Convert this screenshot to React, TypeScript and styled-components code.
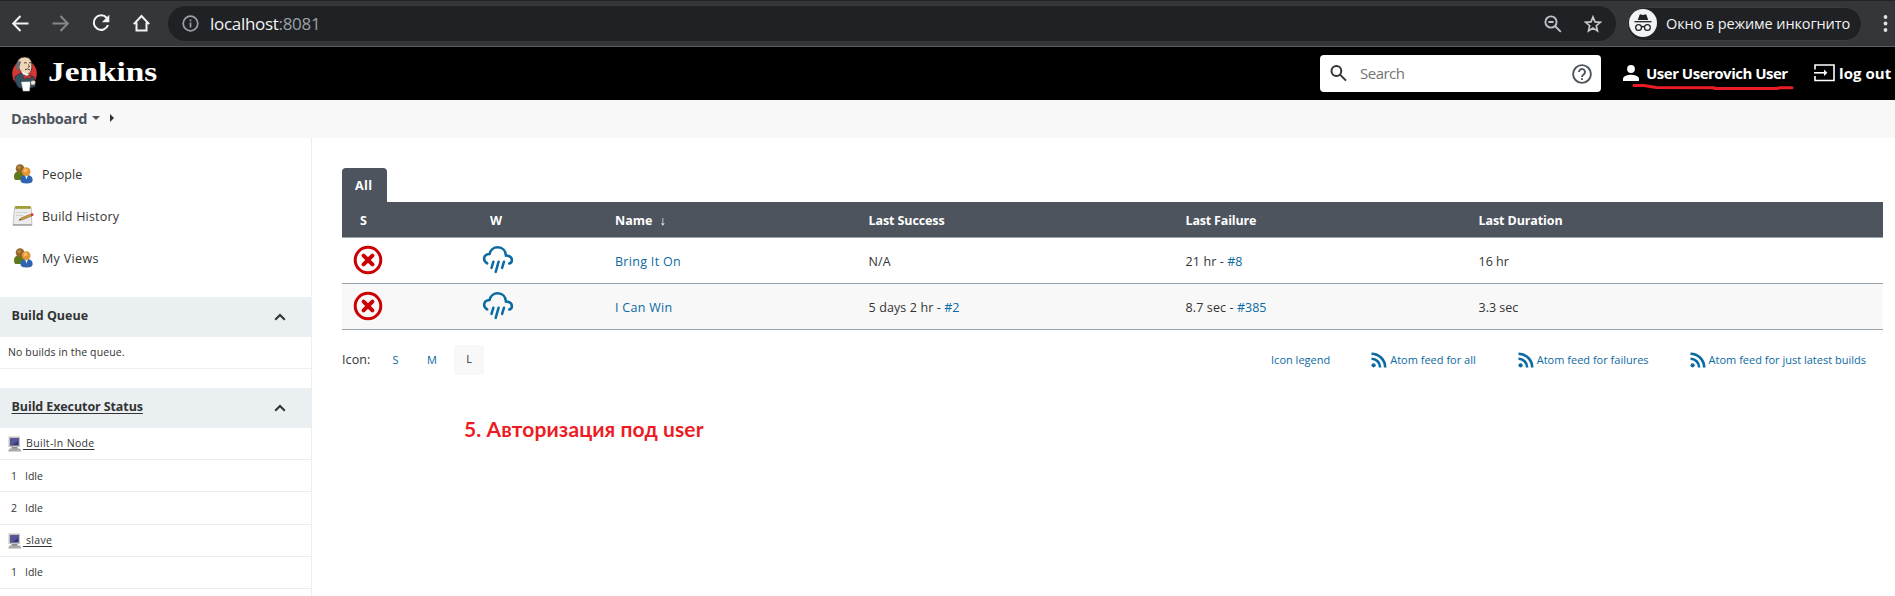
import React from "react";
import styled, { createGlobalStyle, css } from "styled-components";

const GlobalStyle = createGlobalStyle`
  * { box-sizing: border-box; }
  body {
    margin: 0;
    background: #fff;
    color: #333;
    font-family: "Open Sans", "Noto Sans", sans-serif;
    font-size: 12.5px;
    overflow: hidden;
  }
  svg { display: block; flex: none; }
`;

const link = css`
  color: #0b6aa2;
  text-decoration: none;
`;

/* ---------- browser chrome ---------- */

const BrowserBar = styled.div`
  display: flex;
  align-items: center;
  height: 47px;
  padding: 0 3px 0 12px;
  background: #35363a;
  border-top: 1px solid #222327;
  border-bottom: 1px solid #5c5e62;
`;

const NavButtons = styled.div`
  display: flex;
  align-items: center;
  gap: 23px;
  width: 156px;
  padding-bottom: 1px;
`;

const AddressBar = styled.div`
  display: flex;
  align-items: center;
  width: 1448px;
  height: 35px;
  margin-right: 11px;
  padding: 0 14px 0 14px;
  border-radius: 18px;
  background: #202124;
`;

const Address = styled.div`
  flex: 1;
  margin-left: 11px;
  color: #9aa0a6;
  font-size: 17px;
  letter-spacing: -0.3px;

  b {
    color: #f1f3f4;
    font-weight: 400;
  }
`;

const AddressActions = styled.div`
  display: flex;
  align-items: center;
  gap: 22px;
`;

const IncognitoBadge = styled.div`
  display: flex;
  align-items: center;
  gap: 9px;
  width: 235px;
  height: 34px;
  margin-right: 21px;
  padding: 0 0 1px 1px;
  border: 1px solid #3c3d41;
  border-radius: 17px;
  background: #202124;
  color: #f1f3f4;
  font-size: 14.5px;
  letter-spacing: -0.12px;
  white-space: nowrap;
`;

/* ---------- page header ---------- */

const Header = styled.header`
  position: relative;
  display: flex;
  align-items: center;
  height: 53px;
  padding: 0 3px 0 11px;
  background: #000;
  color: #fff;
`;

const BrandName = styled.div`
  flex: 1;
  margin-left: 10px;
  padding-bottom: 4px;
  font: 700 28px/32px "Liberation Serif", serif;

  span {
    display: inline-block;
    transform: scaleX(1.19);
    transform-origin: left;
  }
`;

const SearchBox = styled.div`
  display: flex;
  align-items: center;
  width: 281px;
  height: 37px;
  margin-right: 22px;
  padding: 0 9px 0 10px;
  border-radius: 4px;
  background: #fff;
`;

const Placeholder = styled.span`
  flex: 1;
  margin-left: 13px;
  padding-bottom: 1px;
  color: #757575;
  font-size: 15px;
  letter-spacing: -0.5px;
`;

const HeaderLink = styled.a<{ $width: number; $gap: number; $spacing: number }>`
  display: flex;
  align-items: center;
  gap: ${(p) => p.$gap}px;
  width: ${(p) => p.$width}px;
  padding-bottom: 2px;
  color: #fff;
  font-size: 15px;
  font-weight: 700;
  letter-spacing: ${(p) => p.$spacing}px;
  white-space: nowrap;
`;

const RedUnderline = styled.svg`
  position: absolute;
  top: 35px;
  left: 1630px;
`;

const Breadcrumbs = styled.nav`
  display: flex;
  align-items: center;
  height: 38px;
  padding: 0 0 2px 11px;
  background: #f8f8f8;
  color: #4d545d;
  font-size: 14.5px;
  font-weight: 700;
  letter-spacing: -0.32px;

  svg:first-of-type { margin: 0 10px 0 5px; }
`;

/* ---------- side panel ---------- */

const Body = styled.div`
  display: flex;
  height: 458px;
`;

const SidePanel = styled.aside`
  width: 312px;
  border-right: 1px solid #eceeef;
`;

const Tasks = styled.div`
  padding: 15px 0 18px 12px;
`;

const Task = styled.a<{ $spacing: number }>`
  display: flex;
  align-items: center;
  gap: 8px;
  height: 42px;
  letter-spacing: ${(p) => p.$spacing}px;
`;

const PaneHeader = styled.div<{ $underline?: boolean }>`
  display: flex;
  align-items: center;
  justify-content: space-between;
  height: 40px;
  padding: 0 25px 3px 11.5px;
  background: #eaeff2;
  font-weight: 700;
  text-decoration: ${(p) => (p.$underline ? "underline" : "none")};
  text-underline-offset: 2px;
  letter-spacing: ${(p) => (p.$underline ? "-0.1px" : "0")};

  svg { margin-top: 2px; }
`;

const QueueRow = styled.div`
  display: flex;
  align-items: center;
  height: 32px;
  margin-bottom: 19px;
  padding: 0 0 1px 8px;
  border-bottom: 1px solid #eaeff2;
  font-size: 10.5px;
  letter-spacing: 0.13px;
`;

const ExecutorRow = styled.div<{ $node?: boolean }>`
  display: flex;
  align-items: center;
  gap: ${(p) => (p.$node ? 1 : 8)}px;
  height: 32.2px;
  padding: 0 0 ${(p) => (p.$node ? 1 : 0)}px ${(p) => (p.$node ? 8 : 11)}px;
  border-bottom: 1px solid #ececec;
  font-size: 10.5px;

  svg { margin-top: 2px; }

  a {
    text-decoration: underline;
    text-underline-offset: 2px;
    letter-spacing: 0.32px;
    white-space: pre;
  }
`;

/* ---------- main panel ---------- */

const Main = styled.main`
  width: 1571px;
  padding: 30px 0 0 30px;
`;

const Tab = styled.div`
  display: flex;
  align-items: center;
  width: 45px;
  height: 34px;
  padding-left: 13px;
  border-radius: 4px 4px 0 0;
  background: #4d545d;
  color: #fff;
  font-weight: 700;
  letter-spacing: 0.4px;
`;

const Row = styled.div<{ $striped?: boolean }>`
  display: grid;
  grid-template-columns: 137px 136px 253.5px 317px 293px 1fr;
  align-items: center;
  height: 46px;
  border-bottom: 1px solid #98a5ae;
  background: ${(p) => (p.$striped ? "#f8f8f8" : "#fff")};
`;

const HeadRow = styled(Row)`
  height: 36px;
  background: #4d545d;
  color: #fff;
  font-weight: 700;
  letter-spacing: -0.1px;
`;

const Cell = styled.div<{ $indent?: number; $spacing?: number }>`
  padding: 2px 0 0 ${(p) => p.$indent || 0}px;
  letter-spacing: ${(p) => (p.$spacing === undefined ? "inherit" : p.$spacing + "px")};
`;

const IconCell = styled.div<{ $indent: number }>`
  padding: 0 0 1px ${(p) => p.$indent}px;
`;

const JobLink = styled.a`
  ${link}
  font-weight: 500;
  letter-spacing: 0.3px;
`;

const BuildLink = styled.a`
  ${link}
  font-weight: 500;
  letter-spacing: -0.05px;
`;

const SortArrow = styled.span`
  margin-left: 7px;
  font-weight: 400;
`;

const TableFooter = styled.div`
  display: flex;
  align-items: center;
  height: 59px;
`;

const SizeLabel = styled.span`
  width: 50.5px;
  letter-spacing: 0.1px;
`;

const SizeLink = styled.a<{ $width: number }>`
  ${link}
  width: ${(p) => p.$width}px;
  font-size: 11px;
`;

const SizeCurrent = styled.span`
  display: flex;
  align-items: center;
  justify-content: center;
  width: 30px;
  height: 30px;
  padding-bottom: 2px;
  border-radius: 4px;
  background: #f8f8f8;
  font-size: 11px;
`;

const FeedLinks = styled.div`
  display: flex;
  margin-left: auto;
  padding-right: 17px;
`;

const FeedLink = styled.a<{ $after: number }>`
  ${link}
  display: flex;
  align-items: center;
  gap: 3px;
  margin-right: ${(p) => p.$after}px;
  font-size: 11px;
`;

const Note = styled.p`
  margin: 25px 0 0 122px;
  color: #ed1c24;
  font: 700 21px/30px Lato, "Open Sans", sans-serif;
  letter-spacing: 0.1px;
`;

/* ---------- icons ---------- */

const ArrowIcon = ({ flip, color }: { flip?: boolean; color: string }) => (
  <svg width="17" height="17" viewBox="0 0 17 17" fill="none" stroke={color} strokeWidth="2">
    <path d={flip ? "M.5 8.5H15M8.5 1l7.3 7.5-7.3 7.5" : "M16.5 8.5H2M8.5 1 1.2 8.5l7.3 7.5"} />
  </svg>
);

const ReloadIcon = () => (
  <svg width="18" height="18" viewBox="0 0 18 18" fill="none">
    <path d="M14.8 4A7.3 7.3 0 1 0 16 11" stroke="#f1f3f4" strokeWidth="2.1" />
    <path d="M17.3.8v7.4H9.9z" fill="#f1f3f4" />
  </svg>
);

const HomeIcon = () => (
  <svg width="18" height="18" viewBox="0 0 18 18" fill="none" stroke="#f1f3f4" strokeWidth="2">
    <path d="M.8 10.100 8.500 2l7.700 8.100M3.500 8.500v8h10v-8" />
  </svg>
);

const InfoIcon = () => (
  <svg width="17" height="17" viewBox="0 0 17 17" fill="none" stroke="#9aa0a6" strokeWidth="1.7">
    <circle cx="8.5" cy="8.5" r="7.3" />
    <path d="M8.5 7.6v4.8M8.5 4.5v1.8" />
  </svg>
);

const ZoomOutIcon = () => (
  <svg width="18" height="18" viewBox="0 0 18 18" fill="none" stroke="#bdc1c6" strokeWidth="1.9">
    <circle cx="7" cy="7" r="5.6" />
    <path d="M4.4 7h5.2M11 11l5.8 5.8" />
  </svg>
);

const StarIcon = () => (
  <svg width="18" height="18" viewBox="0 0 18 18" fill="none" stroke="#c4c7ca" strokeWidth="1.7">
    <path d="m9 2 2 4.9 5.3.4-4 3.4 1.2 5.2L9 13.1l-4.5 2.8 1.2-5.2-4-3.4L7 6.9z" />
  </svg>
);

const IncognitoIcon = () => (
  <svg width="28" height="28" viewBox="0 0 28 28">
    <circle cx="14" cy="14" r="14" fill="#f1f3f4" />
    <path d="M8.8 11 10.5 6q.4-.9 1.4-.6l2.1.5 2.1-.5q1-.3 1.4.6l1.7 5z" fill="#202124" />
    <path d="M5.5 12.7h17" stroke="#202124" strokeWidth="1.3" />
    <g fill="none" stroke="#202124" strokeWidth="1.3">
      <circle cx="9.6" cy="18.5" r="2.9" />
      <circle cx="18.4" cy="18.5" r="2.9" />
      <path d="M12.4 18q1.6-1 3.2 0" />
    </g>
  </svg>
);

const MenuDots = () => (
  <svg width="6" height="20" viewBox="0 0 6 20" fill="#dfe1e5">
    <circle cx="2.500" cy="3" r="1.9" />
    <circle cx="2.500" cy="9.5" r="1.9" />
    <circle cx="2.500" cy="16" r="1.9" />
  </svg>
);

const ButlerLogo = () => (
  <svg width="27" height="36" viewBox="0 0 27 36">
    <ellipse cx="13.5" cy="17.5" rx="12.3" ry="13.2" fill="#d33833" />
    <path d="M4 20.5 10 17l7 1.5 6 2.5 1.3 9.5-4 1.2-12 .3Q4 29 4 20.5z" fill="#335061" stroke="#1b2a33" strokeWidth=".7" />
    <path d="M5.7 9.5Q6 1.2 13.8 1q7 .4 7 7.6.3 3-.8 6.5-1.5 3.8-5 3.4Q9.5 17 8.5 13z" fill="#eed5b5" stroke="#2a2522" strokeWidth=".7" />
    <path d="M6 6.2Q4.2 9.5 6 13.4l2.3 1.3.4-4.8 1.2-3.6-1-1.6z" fill="#6d6b6d" />
    <path d="M13 7.1q1.5-1 2.8 0M18 7q1-.7 2 0M14 13.6q2.5-1.5 5 .4M17.6 8.5l.7 2.4-1.2.4" fill="none" stroke="#35302d" strokeWidth=".9" />
    <path d="m10.3 15.5 3.7 6 4.3-3" fill="#fff" />
    <path d="m12.6 18.6 3.4 1.6 3.6-1.6.3 4.2-3.6-1.2-3.2 1.4z" fill="#d33833" stroke="#7a1815" strokeWidth=".5" />
    <path d="m10.4 26 9-.3-1 9.4h-6.3z" fill="#fff" stroke="#bbb" strokeWidth=".5" />
    <path d="M19.5 25.5q3-2.3 5.2 0l-.8 3.4-4 .2z" fill="#f0e8df" stroke="#333" strokeWidth=".6" />
  </svg>
);

const SearchIcon = () => (
  <svg width="17" height="17" viewBox="0 0 17 17" fill="none" stroke="#333" strokeWidth="2">
    <circle cx="6.4" cy="6" r="4.9" />
    <path d="m10 9.600 6 6" />
  </svg>
);

const HelpIcon = () => (
  <svg width="20" height="20" viewBox="0 0 20 20" fill="none" stroke="#4d545d" strokeWidth="1.9">
    <circle cx="10" cy="10" r="8.9" />
    <path d="M7 8a3 3 0 1 1 4.9 2.3c-1.2.9-1.9 1.4-1.9 2.7M10 14.2v1.9" />
  </svg>
);

const UserIcon = () => (
  <svg width="16" height="16" viewBox="0 0 16 16" fill="#fff">
    <circle cx="8" cy="4" r="3.9" />
    <path d="M0 16v-2.2C0 11 5 9.8 8 9.8s8 1.2 8 4V16z" />
  </svg>
);

const LogoutIcon = () => (
  <svg width="21" height="18" viewBox="0 0 21 18" fill="none" stroke="#fff" strokeWidth="1.6">
    <path d="M1 5.5V1h19v15.5H1V12" />
    <path d="M0 8.8h11.5" />
    <path d="m10 5.6 3.4 3.2-3.4 3.2z" fill="#fff" stroke="none" />
  </svg>
);

const PeopleIcon = () => (
  <svg width="22" height="22" viewBox="0 0 22 22">
    <path d="M2 13.5q0-5 5-5t5.5 5l-.6 3.6H3.4Q2 16.600 2 13.5z" fill="#5d7a1c" />
    <circle cx="8" cy="5.600" r="4.300" fill="#94662a" />
    <circle cx="7" cy="4.500" r="1.800" fill="#b48a4c" />
    <path d="M8.500 17q0-5 6-5t6.200 5q0 3.500-6.200 3.500T8.500 17z" fill="#2f64b0" />
    <path d="m12.800 12 1.700 4.500 1.600-4.500z" fill="#e8effa" />
    <circle cx="14.200" cy="8.600" r="4.300" fill="#e4942f" />
    <circle cx="13.400" cy="7.400" r="2" fill="#f8bd69" />
  </svg>
);

const NotepadIcon = () => (
  <svg width="22" height="22" viewBox="0 0 22 22">
    <path d="m2.600 2.500h16.600l.7 17.700H1z" fill="#ececec" stroke="#b5b5b5" strokeWidth=".8" />
    <path d="M1 19.900h19" stroke="#8e8e8e" strokeWidth="1" />
    <path d="M3 1h15.700v2.800H3z" fill="#aba83c" />
    <path d="M4.500 1v2.800M7 1v2.800M9.500 1v2.800M12 1v2.800M14.500 1v2.800M17 1v2.800" stroke="#85822a" strokeWidth=".7" />
    <path d="M4 7.500h12M4 10.500h7" stroke="#cfcfcf" strokeWidth=".9" />
    <path d="m7.200 15.300 2-2.400 10-3.800.8 1.700-9.500 3.900z" fill="#d6a23e" stroke="#785620" strokeWidth=".6" />
    <circle cx="20.200" cy="9.700" r="1.400" fill="#d8373a" />
    <path d="m7.200 15.300.9-1.400.8 1.200z" fill="#222" />
  </svg>
);

const ComputerIcon = () => (
  <svg width="14" height="16" viewBox="0 0 14 16">
    <path d="M.5.500h11.500v10.500H.5z" fill="#c2c2be" />
    <path d="M2 2h8.700v7.500H2z" fill="#35357a" />
    <path d="M10.700 2v2.600L4 9.500H2V2z" fill="#55559a" />
    <path d="M3.500 11h6v2h-6z" fill="#8d8d88" />
    <path d="M1.500 12.600h10.500l1.500 2.800H0z" fill="#aaaaa4" />
  </svg>
);

const ChevronUp = () => (
  <svg width="12" height="8" viewBox="0 0 12 8" fill="none" stroke="#333" strokeWidth="2.1">
    <path d="m1.200 6.800 4.800-4.800 4.800 4.800" />
  </svg>
);

const FailedIcon = () => (
  <svg width="30" height="30" viewBox="0 0 30 30" fill="none" stroke="#cc0003">
    <circle cx="15" cy="15" r="12.800" strokeWidth="3" />
    <path d="m10.600 10.600 8.800 8.800M19.400 10.600l-8.800 8.800" strokeWidth="4" strokeLinecap="round" />
  </svg>
);

const RainIcon = () => (
  <svg width="32" height="30" viewBox="0 0 32 30" fill="none" stroke="#0b6aa2" strokeWidth="2.500" strokeLinecap="round">
    <path d="M5.200 18.400C2.800 17 1.900 15.200 2.200 13 2.600 10.400 4.700 9 7.600 8.900 8.300 5 11.500 2.200 15.700 2.200c4.800 0 8 3.500 8.200 8.300 3.600.1 6 1.900 6 4.700 0 1.600-1 2.900-2.700 3.300" />
    <path d="m11.400 16.700-1.900 6.200M16.600 16.700l-2.900 10.200M22 16.700l-1.900 6.200" />
  </svg>
);

const FeedIcon = () => (
  <svg width="16" height="16" viewBox="0 0 16 16" fill="none" stroke="#0b6aa2" strokeWidth="2.600">
    <circle cx="2.600" cy="13.300" r="2.100" fill="#0b6aa2" stroke="none" />
    <path d="M.5 6.700a8.600 8.600 0 0 1 8.600 8.700M.5 1.700a13.700 13.700 0 0 1 13.700 13.700" />
  </svg>
);

/* ---------- data ---------- */

type Build = { time: string; number?: string };

const jobs: { name: string; success: Build; failure: Build; duration: string }[] = [
  { name: "Bring It On", success: { time: "N/A" }, failure: { time: "21 hr - ", number: "#8" }, duration: "16 hr" },
  {
    name: "I Can Win",
    success: { time: "5 days 2 hr - ", number: "#2" },
    failure: { time: "8.7 sec - ", number: "#385" },
    duration: "3.3 sec",
  },
];

const BuildCell = ({ build }: { build: Build }) => (
  <Cell $spacing={0.12}>
    {build.time}
    {build.number && <BuildLink>{build.number}</BuildLink>}
  </Cell>
);

const Executor = ({ index }: { index: number }) => (
  <ExecutorRow>
    <span>{index}</span>
    <span>Idle</span>
  </ExecutorRow>
);

const ExecutorNode = ({ name }: { name: string }) => (
  <ExecutorRow $node>
    <ComputerIcon />
    <a>{" " + name}</a>
  </ExecutorRow>
);

export default function App() {
  return (
    <>
      <GlobalStyle />
      <BrowserBar>
        <NavButtons>
          <ArrowIcon color="#f1f3f4" />
          <ArrowIcon flip color="#85878a" />
          <ReloadIcon />
          <HomeIcon />
        </NavButtons>
        <AddressBar>
          <InfoIcon />
          <Address>
            <b>localhost</b>:8081
          </Address>
          <AddressActions>
            <ZoomOutIcon />
            <StarIcon />
          </AddressActions>
        </AddressBar>
        <IncognitoBadge>
          <IncognitoIcon />
          Окно в режиме инкогнито
        </IncognitoBadge>
        <MenuDots />
      </BrowserBar>

      <Header>
        <ButlerLogo />
        <BrandName>
          <span>Jenkins</span>
        </BrandName>
        <SearchBox>
          <SearchIcon />
          <Placeholder>Search</Placeholder>
          <HelpIcon />
        </SearchBox>
        <HeaderLink $width={191} $gap={7} $spacing={-0.5}>
          <UserIcon />
          User Userovich User
        </HeaderLink>
        <HeaderLink $width={78} $gap={4} $spacing={0.05}>
          <LogoutIcon />
          log out
        </HeaderLink>
        <RedUnderline width="166" height="10" viewBox="0 0 166 10" fill="none" stroke="#ed1c24" strokeWidth="3" strokeLinecap="round">
          <path d="M4 3.500h10l12 2 58 .2 1 .8h62l3-.8h12" />
        </RedUnderline>
      </Header>

      <Breadcrumbs>
        Dashboard
        <svg width="8" height="4" viewBox="0 0 8 4" fill="#4d545d">
          <path d="M0 0h8L4 4z" />
        </svg>
        <svg width="4" height="8" viewBox="0 0 4 8" fill="#333">
          <path d="M0 0v8l4-4z" />
        </svg>
      </Breadcrumbs>

      <Body>
        <SidePanel>
          <Tasks>
            <Task $spacing={0.1}>
              <PeopleIcon />
              People
            </Task>
            <Task $spacing={0.2}>
              <NotepadIcon />
              Build History
            </Task>
            <Task $spacing={0.35}>
              <PeopleIcon />
              My Views
            </Task>
          </Tasks>
          <PaneHeader>
            Build Queue
            <ChevronUp />
          </PaneHeader>
          <QueueRow>No builds in the queue.</QueueRow>
          <PaneHeader $underline>
            Build Executor Status
            <ChevronUp />
          </PaneHeader>
          <ExecutorNode name="Built-In Node" />
          <Executor index={1} />
          <Executor index={2} />
          <ExecutorNode name="slave" />
          <Executor index={1} />
        </SidePanel>

        <Main>
          <Tab>All</Tab>
          <HeadRow>
            <Cell $indent={18}>S</Cell>
            <Cell $indent={11}>W</Cell>
            <Cell $spacing={0}>
              Name<SortArrow>↓</SortArrow>
            </Cell>
            <Cell>Last Success</Cell>
            <Cell $spacing={-0.18}>Last Failure</Cell>
            <Cell>Last Duration</Cell>
          </HeadRow>
          {jobs.map((job, i) => (
            <Row key={job.name} $striped={i % 2 === 1}>
              <IconCell $indent={11}>
                <FailedIcon />
              </IconCell>
              <IconCell $indent={3}>
                <RainIcon />
              </IconCell>
              <Cell>
                <JobLink>{job.name}</JobLink>
              </Cell>
              <BuildCell build={job.success} />
              <BuildCell build={job.failure} />
              <Cell>{job.duration}</Cell>
            </Row>
          ))}
          <TableFooter>
            <SizeLabel>Icon:</SizeLabel>
            <SizeLink $width={34.5}>S</SizeLink>
            <SizeLink $width={27}>M</SizeLink>
            <SizeCurrent>L</SizeCurrent>
            <FeedLinks>
              <FeedLink $after={41}>Icon legend</FeedLink>
              <FeedLink $after={42}>
                <FeedIcon />
                Atom feed for all
              </FeedLink>
              <FeedLink $after={41}>
                <FeedIcon />
                Atom feed for failures
              </FeedLink>
              <FeedLink $after={0}>
                <FeedIcon />
                Atom feed for just latest builds
              </FeedLink>
            </FeedLinks>
          </TableFooter>
          <Note>5. Авторизация под user</Note>
        </Main>
      </Body>
    </>
  );
}
